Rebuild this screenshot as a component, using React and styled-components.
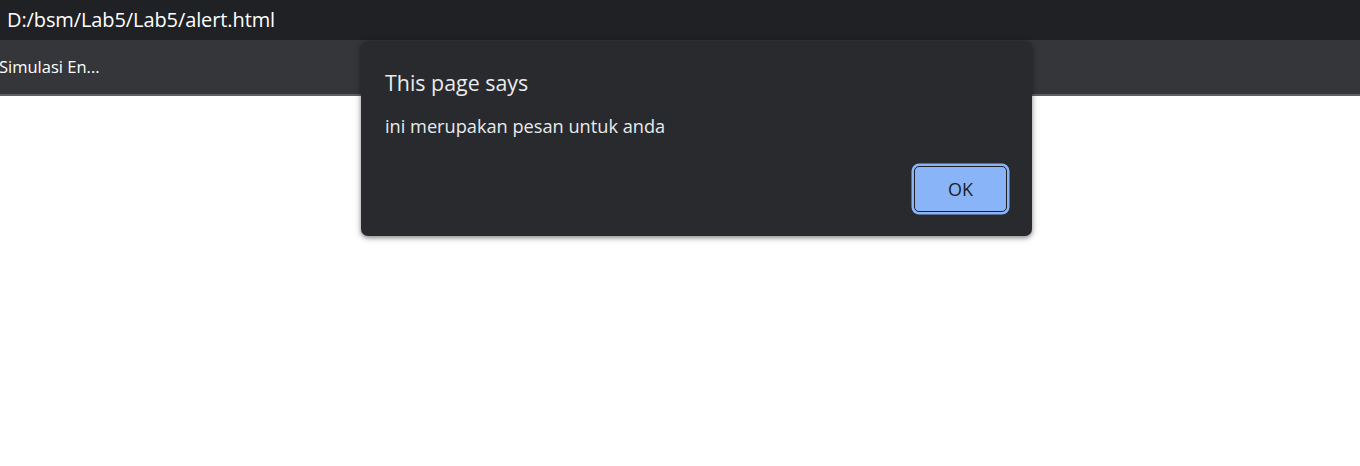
import React from "react";
import styled, { createGlobalStyle } from "styled-components";

const GlobalStyle = createGlobalStyle`
  html, body { margin: 0; padding: 0; background: #ffffff; }
  body { font-family: "Open Sans", "Noto Sans", sans-serif; }
  * { box-sizing: border-box; }
`;

const Page = styled.div`
  position: relative;
  width: 1360px;
  height: 466px;
  display: flex;
  flex-direction: column;
  background: #ffffff;
  overflow: hidden;
`;

const AddressBar = styled.div`
  height: 40px;
  background: #202124;
  color: #ffffff;
  display: flex;
  align-items: center;
  padding-left: 7px;
  padding-bottom: 1px;
  font-family: "Open Sans", sans-serif;
  font-size: 20px;
  letter-spacing: -0.1px;
`;

const BookmarkBar = styled.div`
  height: 56px;
  background: #35363a;
  border-bottom: 2px solid #5f6064;
  display: flex;
  align-items: center;
  padding-bottom: 2px;
  color: #ffffff;
  font-family: "Open Sans", sans-serif;
  font-size: 16.5px;
`;

const Bookmark = styled.span`
  margin-left: -1px;
`;

const Content = styled.div`
  flex: 1;
  background: #ffffff;
`;

const Dialog = styled.div`
  position: absolute;
  top: 41px;
  left: 361px;
  width: 671px;
  height: 195px;
  background: #292a2d;
  border-radius: 7px;
  box-shadow: 0 2px 4px rgba(0, 0, 0, 0.35), 0 1px 8px rgba(0, 0, 0, 0.2);
  display: flex;
  flex-direction: column;
  padding: 28px 23px 24px 24px;
  color: #e8eaed;
  font-family: "Open Sans", sans-serif;
`;

const Title = styled.div`
  font-size: 21.4px;
  line-height: 28px;
`;

const Message = styled.div`
  margin-top: 17px;
  font-size: 18.2px;
  line-height: 24px;
`;

const Actions = styled.div`
  margin-top: auto;
  display: flex;
  justify-content: flex-end;
`;

const OkButton = styled.button`
  width: 93px;
  height: 46px;
  margin-right: 2px;
  background: #8ab4f8;
  border: 1.5px solid #202124;
  border-radius: 5px;
  box-shadow: 0 0 0 2.5px #8ab4f8;
  color: #202124;
  font-family: "Open Sans", sans-serif;
  font-size: 18px;
  padding: 0;
  cursor: pointer;
`;

export default function App() {
  return (
    <>
      <GlobalStyle />
      <Page>
        <AddressBar>D:/bsm/Lab5/Lab5/alert.html</AddressBar>
        <BookmarkBar>
          <Bookmark>Simulasi En...</Bookmark>
        </BookmarkBar>
        <Content />
        <Dialog role="alertdialog">
          <Title>This page says</Title>
          <Message>ini merupakan pesan untuk anda</Message>
          <Actions>
            <OkButton>OK</OkButton>
          </Actions>
        </Dialog>
      </Page>
    </>
  );
}
